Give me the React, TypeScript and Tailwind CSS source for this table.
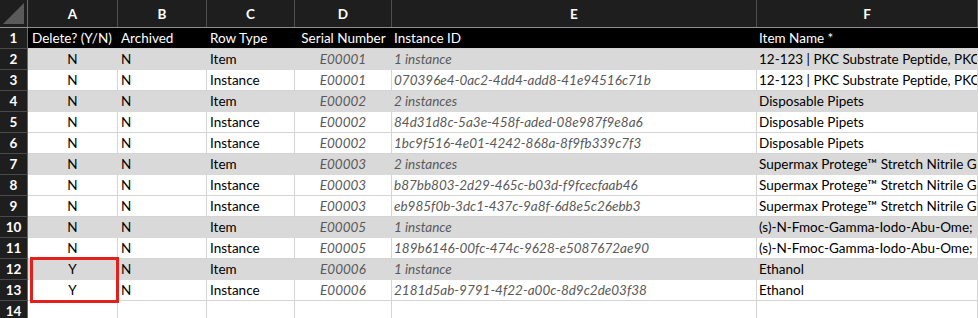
import React from 'react';

type Row = {
  del: string;
  archived: string;
  type: 'Item' | 'Instance';
  serial: string;
  instance: string;
  name: string;
};

const rows: Row[] = [
  { del: 'N', archived: 'N', type: 'Item', serial: 'E00001', instance: '1 instance', name: '12-123 | PKC Substrate Peptide, PKC Substrate' },
  { del: 'N', archived: 'N', type: 'Instance', serial: 'E00001', instance: '070396e4-0ac2-4dd4-add8-41e94516c71b', name: '12-123 | PKC Substrate Peptide, PKC Substrate' },
  { del: 'N', archived: 'N', type: 'Item', serial: 'E00002', instance: '2 instances', name: 'Disposable Pipets' },
  { del: 'N', archived: 'N', type: 'Instance', serial: 'E00002', instance: '84d31d8c-5a3e-458f-aded-08e987f9e8a6', name: 'Disposable Pipets' },
  { del: 'N', archived: 'N', type: 'Instance', serial: 'E00002', instance: '1bc9f516-4e01-4242-868a-8f9fb339c7f3', name: 'Disposable Pipets' },
  { del: 'N', archived: 'N', type: 'Item', serial: 'E00003', instance: '2 instances', name: 'Supermax Protege™ Stretch Nitrile Gloves' },
  { del: 'N', archived: 'N', type: 'Instance', serial: 'E00003', instance: 'b87bb803-2d29-465c-b03d-f9fcecfaab46', name: 'Supermax Protege™ Stretch Nitrile Gloves' },
  { del: 'N', archived: 'N', type: 'Instance', serial: 'E00003', instance: 'eb985f0b-3dc1-437c-9a8f-6d8e5c26ebb3', name: 'Supermax Protege™ Stretch Nitrile Gloves' },
  { del: 'N', archived: 'N', type: 'Item', serial: 'E00005', instance: '1 instance', name: '(s)-N-Fmoc-Gamma-Iodo-Abu-Ome;' },
  { del: 'N', archived: 'N', type: 'Instance', serial: 'E00005', instance: '189b6146-00fc-474c-9628-e5087672ae90', name: '(s)-N-Fmoc-Gamma-Iodo-Abu-Ome;' },
  { del: 'Y', archived: 'N', type: 'Item', serial: 'E00006', instance: '1 instance', name: 'Ethanol' },
  { del: 'Y', archived: 'N', type: 'Instance', serial: 'E00006', instance: '2181d5ab-9791-4f22-a00c-8d9c2de03f38', name: 'Ethanol' },
];

// column widths include the 1px right border
const widths = ['w-[90px]', 'w-[89px]', 'w-[88px]', 'w-[97px]', 'w-[365px]', 'flex-1'];

function RowNum({ n }: { n: number }) {
  return (
    <div className="w-[28px] shrink-0 h-[21px] flex items-center justify-center bg-[#1e1e1e] text-white font-bold border-r border-r-[#6b6b6b] border-b border-b-[#4a4a4a]">
      {n}
    </div>
  );
}

function App() {
  return (
    <div
      className="relative w-[978px] h-[318px] overflow-hidden bg-white text-[13.5px] leading-[20px] text-black"
      style={{ fontFamily: 'Lato, "Noto Sans", sans-serif' }}
    >
      {/* column letters */}
      <div className="flex h-[28px] bg-[#1e1e1e] text-white font-bold border-b border-[#8f8f8f]">
        <div className="w-[28px] shrink-0 border-r border-[#6b6b6b] flex items-end justify-end pr-[3px] pb-[3px]">
          <svg width="21" height="21" viewBox="0 0 21 21">
            <polygon points="0,21 21,0 21,21" fill="#5a5a5a" />
          </svg>
        </div>
        {['A', 'B', 'C', 'D', 'E', 'F'].map((l, i) => (
          <div key={l} className={`${widths[i]} shrink-0 flex items-center justify-center border-r border-[#4f4f4f]`}>
            {l}
          </div>
        ))}
      </div>

      {/* header row 1 */}
      <div className="flex">
        <RowNum n={1} />
        <div className="flex flex-1 h-[21px] bg-black text-white border-b border-[#d4d4d4]">
          <div className={`${widths[0]} shrink-0 pl-[4px] whitespace-nowrap`}>Delete? (Y/N)</div>
          <div className={`${widths[1]} shrink-0 pl-[3px]`}>Archived</div>
          <div className={`${widths[2]} shrink-0 pl-[3px]`}>Row Type</div>
          <div className={`${widths[3]} shrink-0 text-center whitespace-nowrap`}>Serial Number</div>
          <div className={`${widths[4]} shrink-0 pl-[2px]`}>Instance ID</div>
          <div className={`${widths[5]} pl-[2px] whitespace-nowrap`}>Item Name *</div>
        </div>
      </div>

      {rows.map((r, idx) => {
        const grey = r.type === 'Item';
        const cell = grey
          ? 'bg-[#d9d9d9] border-r border-b border-[#d9d9d9]'
          : 'bg-white border-r border-b border-[#d4d4d4]';
        return (
          <div key={idx} className="flex h-[21px]">
            <RowNum n={idx + 2} />
            <div className={`${widths[0]} shrink-0 text-center ${cell}`}>{r.del}</div>
            <div className={`${widths[1]} shrink-0 pl-[3px] ${cell}`}>{r.archived}</div>
            <div className={`${widths[2]} shrink-0 pl-[3px] ${cell}`}>{r.type}</div>
            <div className={`${widths[3]} shrink-0 text-center italic text-[#595959] ${cell}`}>{r.serial}</div>
            <div className={`${widths[4]} shrink-0 pl-[2px] italic text-[#595959] whitespace-nowrap overflow-hidden ${cell}`}>{r.instance}</div>
            <div className={`${widths[5]} min-w-0 pl-[2px] whitespace-nowrap overflow-hidden ${cell}`}>{r.name}</div>
          </div>
        );
      })}

      {/* empty row 14 */}
      <div className="flex h-[21px]">
        <RowNum n={14} />
        {widths.map((w, i) => (
          <div key={i} className={`${w} shrink-0 bg-white border-r border-b border-[#d4d4d4]`} />
        ))}
      </div>

      {/* red highlight around A12:A13 */}
      <div className="absolute left-[30px] top-[257px] w-[89px] h-[46px] border-[3px] border-[#e3211c]" />
    </div>
  );
}

export default App;
